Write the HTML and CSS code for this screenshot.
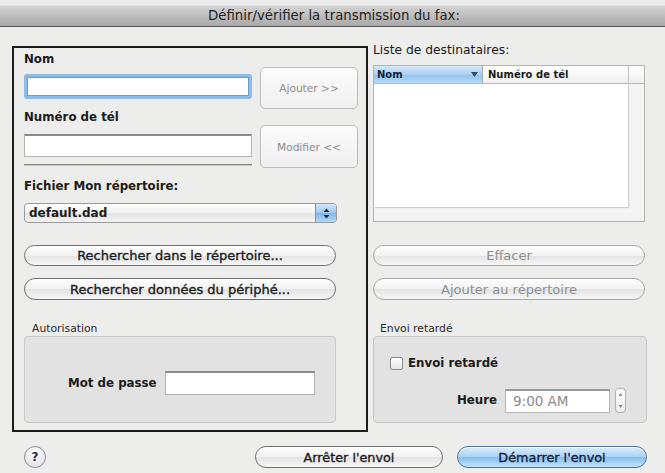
FILE: index.html
```html
<!DOCTYPE html>
<html lang="fr">
<head>
<meta charset="utf-8">
<title>Définir/vérifier la transmission du fax</title>
<link rel="stylesheet" href="styles.css">
</head>
<body>
<div class="titlebar"><div class="title">Définir/vérifier la transmission du fax:</div></div>
<div class="main">
  <div class="panel">
    <div class="top">
      <div class="fields">
        <div class="lbl">Nom</div>
        <div class="field focus"></div>
        <div class="lbl tel">Numéro de tél</div>
        <div class="field phone"></div>
        <div class="sep"></div>
      </div>
      <div class="sidebtns">
        <div class="sqbtn add">Ajouter &gt;&gt;</div>
        <div class="sqbtn mod">Modifier &lt;&lt;</div>
      </div>
    </div>
    <div class="lbl file">Fichier Mon répertoire:</div>
    <div class="popup">
      <span class="popup-text">default.dad</span>
      <span class="popup-arrows"><svg width="7" height="11" viewBox="0 0 7 11"><path d="M3.5 0.5 L6.5 4 L0.5 4 Z" fill="#1d2a3a"/><path d="M0.5 7 L6.5 7 L3.5 10.5 Z" fill="#1d2a3a"/></svg></span>
    </div>
    <div class="pill strong search1">Rechercher dans le répertoire...</div>
    <div class="pill strong search2">Rechercher données du périphé...</div>
    <div class="small">Autorisation</div>
    <div class="group auth">
      <span class="lbl pwlbl">Mot de passe</span>
      <div class="field pw"></div>
    </div>
  </div>
  <div class="right">
    <div class="listlbl">Liste de destinataires:</div>
    <div class="list">
      <div class="list-head">
        <div class="col col-nom"><span>Nom</span><svg width="7" height="5" viewBox="0 0 7 5"><path d="M0 0 L7 0 L3.5 5 Z" fill="#2b4a6e"/></svg></div>
        <div class="col col-tel">Numéro de tél</div>
        <div class="col col-end"></div>
      </div>
      <div class="list-body"><div class="list-rows"></div></div>
    </div>
    <div class="pill disabled erase">Effacer</div>
    <div class="pill disabled addrep">Ajouter au répertoire</div>
    <div class="small">Envoi retardé</div>
    <div class="group delay">
      <div class="checkrow"><span class="checkbox"></span><span class="lbl">Envoi retardé</span></div>
      <div class="timerow">
        <span class="lbl">Heure</span>
        <div class="field time">9:00 AM</div>
        <div class="stepper"><svg width="5" height="17" viewBox="0 0 5 17"><path d="M2.5 1 L4.5 4 L0.5 4 Z" fill="#8a8a8a"/><path d="M0.5 13 L4.5 13 L2.5 16 Z" fill="#8a8a8a"/></svg></div>
      </div>
    </div>
  </div>
</div>
<div class="footer">
  <div class="help">?</div>
  <div class="pill strong stop">Arrêter l'envoi</div>
  <div class="pill strong start">Démarrer l'envoi</div>
</div>
</body>
</html>
```
FILE: styles.css
```css
* { box-sizing: border-box; }
html, body { margin: 0; padding: 0; }
body {
  width: 665px;
  height: 473px;
  overflow: hidden;
  background: #ededec;
  font-family: "DejaVu Sans", "Liberation Sans", sans-serif;
  color: #1b1b1b;
}
.titlebar {
  height: 27px;
  padding-top: 6px;
  background: linear-gradient(to bottom, #ebebeb 0px, #ebebeb 5px, #d2d2d2 6px, #a9a9a9 26px);
  border-bottom: 1px solid #555;
}
.title {
  text-align: center;
  font-size: 13.3px;
  line-height: 20px;
  color: #222;
  padding-left: 3px;
}
.main {
  display: flex;
  gap: 5px;
  padding: 19px 18px 0 12px;
}
.panel {
  width: 356px;
  height: 386px;
  border: 2px solid #1c1c1c;
  padding: 4px 0 0 10px;
}
.lbl {
  font-size: 11.8px;
  font-weight: bold;
  line-height: 15px;
  color: #1b1b1b;
}
.top { display: flex; }
.fields { width: 228px; }
.field {
  background: #fff;
  border: 1px solid #b4b4b4;
  border-top: 2px solid #8a8a8a;
}
.field.focus {
  margin-top: 7px;
  height: 25px;
  border: 3px solid #8fbbe8;
  border-radius: 3px;
  box-shadow: inset 0 0 0 1px #6d9acb;
}
.lbl.tel { margin-top: 11px; }
.field.phone { margin-top: 9px; height: 23px; }
.sep {
  margin-top: 7px;
  height: 2px;
  border-top: 1px solid #858585;
  border-bottom: 1px solid #c9c9c9;
}
.sidebtns { width: 98px; margin-left: 8px; }
.sqbtn {
  display: flex;
  align-items: center;
  justify-content: center;
  border: 1px solid #bcbcbc;
  border-radius: 5px;
  background: linear-gradient(to bottom, #fbfbfb, #f0f0f0);
  font-size: 10.6px;
  color: #8e8e8e;
}
.sqbtn.add { margin-top: 15px; height: 42px; }
.sqbtn.mod { margin-top: 16px; height: 43px; }
.lbl.file { margin-top: 11px; }
.popup {
  margin-top: 9px;
  width: 313px;
  height: 20px;
  display: flex;
  border: 1px solid #9a9a9a;
  border-radius: 4px;
  background: linear-gradient(to bottom, #ffffff, #f1f1f1 50%, #e4e4e4 51%, #f3f3f3);
  overflow: hidden;
}
.popup-text {
  flex: 1;
  font-size: 12px;
  font-weight: bold;
  line-height: 18px;
  padding-left: 4px;
}
.popup-arrows {
  width: 21px;
  display: flex;
  align-items: center;
  justify-content: center;
  background: linear-gradient(to bottom, #d3e7fb, #9ec8f1 50%, #7fb5ea 51%, #b5d8f8);
  border-left: 1px solid #6f96c2;
}
.pill {
  display: flex;
  align-items: center;
  justify-content: center;
  border: 1px solid #6f6f6f;
  border-radius: 11px;
  background: linear-gradient(to bottom, #fefefe 0%, #f2f2f2 50%, #e3e3e3 51%, #f6f6f6 100%);
  box-shadow: inset 0 1px 0 #ffffff;
  font-size: 13px;
  color: #1b1b1b;
  white-space: nowrap;
}
.pill.strong { -webkit-text-stroke: 0.35px #1b1b1b; }
.pill.search1 { margin-top: 22px; width: 312px; height: 21px; }
.pill.search2 { margin-top: 12px; width: 312px; height: 22px; }
.pill.disabled { border-color: #a8a8a8; color: #8e8e8e; }
.small {
  margin-top: 23px;
  font-size: 10.8px;
  line-height: 12px;
  color: #2a2a2a;
  padding-left: 8px;
}
.group {
  margin-top: 1px;
  height: 87px;
  background: #e2e2e2;
  border: 1px solid #c8c8c8;
  border-radius: 4px;
}
.group.auth {
  width: 312px;
  display: flex;
  align-items: flex-start;
  padding: 34px 0 0 43px;
}
.pwlbl { line-height: 24px; width: 89px; }
.field.pw { margin-left: 8px; width: 150px; height: 24px; }
.right { width: 274px; }
.listlbl {
  margin-top: -3px;
  font-size: 12.3px;
  line-height: 15px;
}
.list {
  margin-top: 7px;
  width: 272px;
  height: 157px;
  border: 1px solid #b4b4b4;
  display: flex;
  flex-direction: column;
  background: #f4f4f4;
}
.list-head {
  display: flex;
  height: 18px;
  border-bottom: 1px solid #b9b9b9;
  background: linear-gradient(to bottom, #ffffff, #efefef);
  font-size: 10px;
  font-weight: bold;
  line-height: 17px;
}
.col-nom {
  width: 108px;
  display: flex;
  align-items: center;
  justify-content: space-between;
  padding: 0 4px 0 3px;
  background: linear-gradient(to bottom, #d4e8fb, #a9cff3 50%, #93c2ef 51%, #b6d8f6);
  color: #14243c;
}
.col-tel {
  width: 146px;
  padding-left: 5px;
  border-left: 1px solid #a9a9a9;
}
.col-end { flex: 1; border-left: 1px solid #c2c2c2; }
.list-body { flex: 1; }
.list-rows {
  width: 254px;
  height: 123px;
  background: #fff;
  box-shadow: 1px 1px 1px #cfcfcf;
}
.pill.erase { margin-top: 23px; width: 272px; height: 21px; }
.pill.addrep { margin-top: 12px; width: 272px; height: 22px; }
.right .small { padding-left: 7px; }
.group.delay {
  width: 274px;
  padding: 20px 20px 0 16px;
}
.checkrow { display: flex; align-items: center; height: 13px; }
.checkbox {
  width: 13px;
  height: 13px;
  border: 1px solid #8a8a8a;
  border-radius: 2px;
  background: linear-gradient(to bottom, #ffffff, #e6e6e6);
  margin-right: 5px;
}
.timerow {
  margin-top: 18px;
  display: flex;
  align-items: center;
  justify-content: flex-end;
}
.field.time {
  margin-left: 8px;
  width: 105px;
  height: 24px;
  font-size: 13.5px;
  line-height: 21px;
  color: #8a8a8a;
  padding-left: 7px;
  border-top-color: #9a9a9a;
}
.stepper {
  margin-left: 5px;
  width: 11px;
  height: 25px;
  border: 1px solid #b0b0b0;
  border-radius: 4px;
  background: linear-gradient(to bottom, #ffffff, #eeeeee);
  display: flex;
  align-items: center;
  justify-content: center;
}
.footer {
  margin-top: 14px;
  height: 22px;
  display: flex;
  align-items: center;
  padding: 0 18px 0 24px;
}
.help {
  width: 22px;
  height: 22px;
  border-radius: 50%;
  border: 1px solid #8c8c9a;
  background: radial-gradient(circle at 50% 30%, #ffffff, #dcdce2);
  display: flex;
  align-items: center;
  justify-content: center;
  font-size: 12px;
  font-weight: bold;
  color: #2d2750;
}
.pill.stop { margin-left: auto; width: 188px; height: 22px; font-size: 12.8px; }
.pill.start {
  margin-left: 14px;
  width: 190px;
  height: 22px;
  font-size: 12.8px;
  border-color: #4f7397;
  background: linear-gradient(to bottom, #dceefd 0%, #a9d1f5 50%, #85bdee 51%, #c4e3fb 100%);
  color: #10233a;
  -webkit-text-stroke: 0.35px #10233a;
}
```
